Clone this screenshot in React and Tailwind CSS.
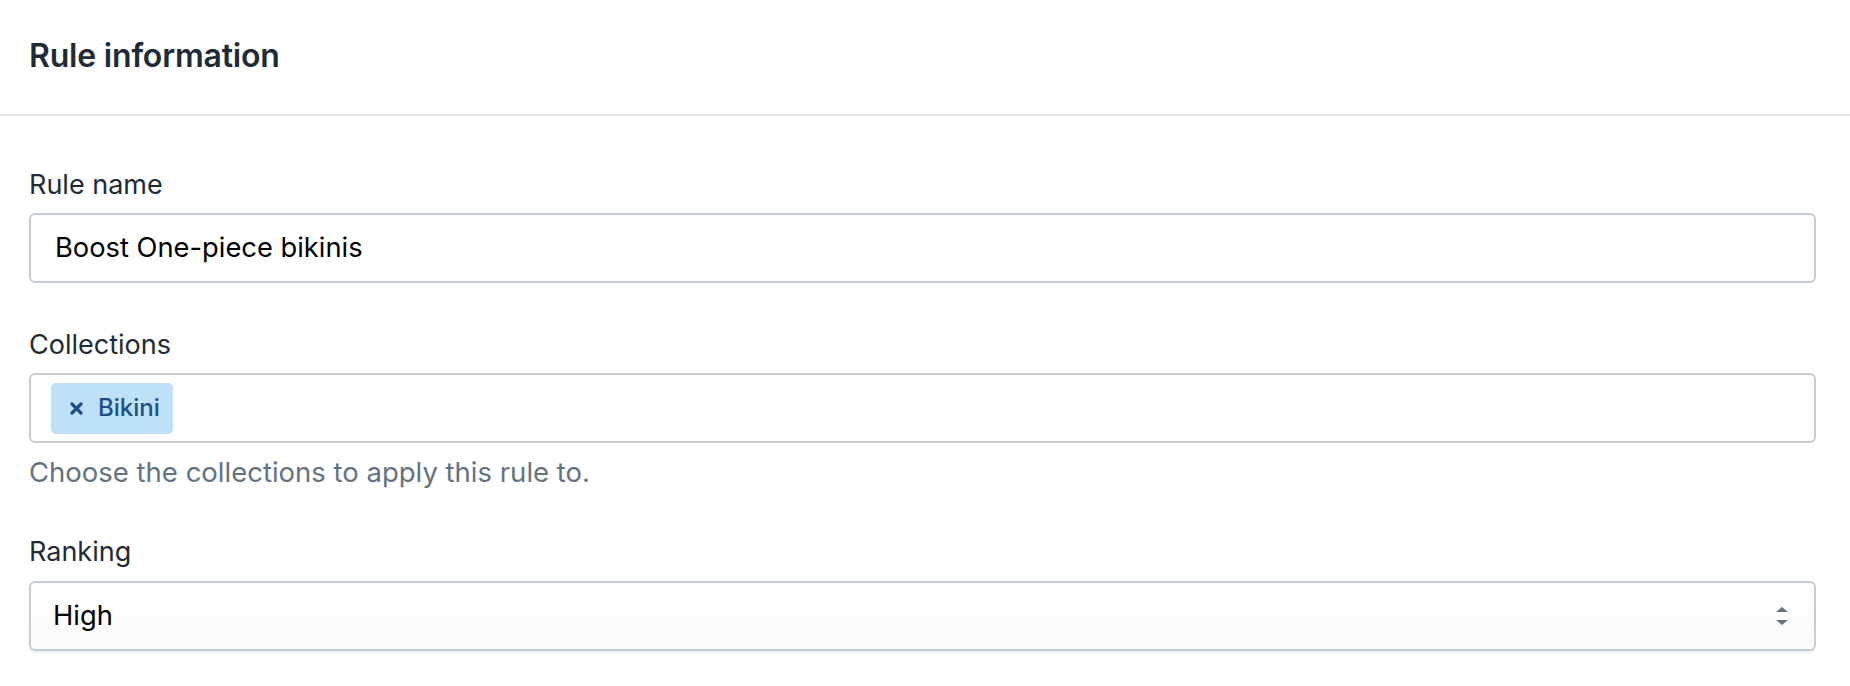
import React from 'react';

// Pfeile für das Select-Feld
const SelectArrows = () => (
  <svg width="12" height="18" viewBox="0 0 12 18" className="shrink-0">
    <path d="M6 0L12 5H0z" fill="#637381" />
    <path d="M0 13h12l-6 5z" fill="#637381" />
  </svg>
);

const CloseIcon = () => (
  <svg width="13" height="13" viewBox="0 0 13 13" className="shrink-0">
    <path d="M2 2l9 9M11 2l-9 9" stroke="#1f4e89" strokeWidth="3.2" strokeLinecap="round" />
  </svg>
);

export default function App() {
  return (
    <div className="min-h-screen bg-white text-[#212b36]" style={{ fontFamily: 'Inter, "Noto Sans", sans-serif' }}>
      {/* Kopfzeile */}
      <div className="h-[114px] flex items-center pb-[3px] pl-[29px] pr-[34px]">
        <h2 className="text-[32px] leading-none font-semibold tracking-[-0.2px]">Rule information</h2>
      </div>
      <div className="border-t-2 border-[#dfe3e8]" />

      <div className="pl-[29px] pr-[34px] pt-[51px]">
        {/* Rule name */}
        <label className="block text-[27px] leading-[36px]">Rule name</label>
        <div className="mt-[10px] h-[70px] flex items-center border-2 border-[#c4cdd5] rounded-[6px] pl-[24px]">
          <span className="text-[27.3px] text-black">Boost One-piece bikinis</span>
        </div>

        {/* Collections */}
        <label className="block mt-[44px] text-[27px] leading-[36px]">Collections</label>
        <div className="mt-[10px] h-[70px] flex items-center border-2 border-[#cccccc] rounded-[6px] pl-[20px]">
          <div className="h-[51px] flex items-center gap-[15px] bg-[#bee1f8] rounded-[5px] pl-[19px] pr-[13px]">
            <CloseIcon />
            <span className="text-[24px] font-medium text-[#1f4e89]">Bikini</span>
          </div>
        </div>
        <p className="mt-[11px] text-[27.5px] leading-[36px] text-[#637381]">Choose the collections to apply this rule to.</p>

        {/* Ranking */}
        <label className="block mt-[44px] text-[27px] leading-[36px]">Ranking</label>
        <div className="mt-[11px] h-[70px] flex items-center justify-between border-2 border-[#c4cdd5] rounded-[6px] pl-[22px] pr-[26px] bg-gradient-to-b from-white to-[#f9fafb] shadow-[0_2px_2px_rgba(0,0,0,0.06)]">
          <span className="text-[27.3px] text-black">High</span>
          <SelectArrows />
        </div>
      </div>
    </div>
  );
}
